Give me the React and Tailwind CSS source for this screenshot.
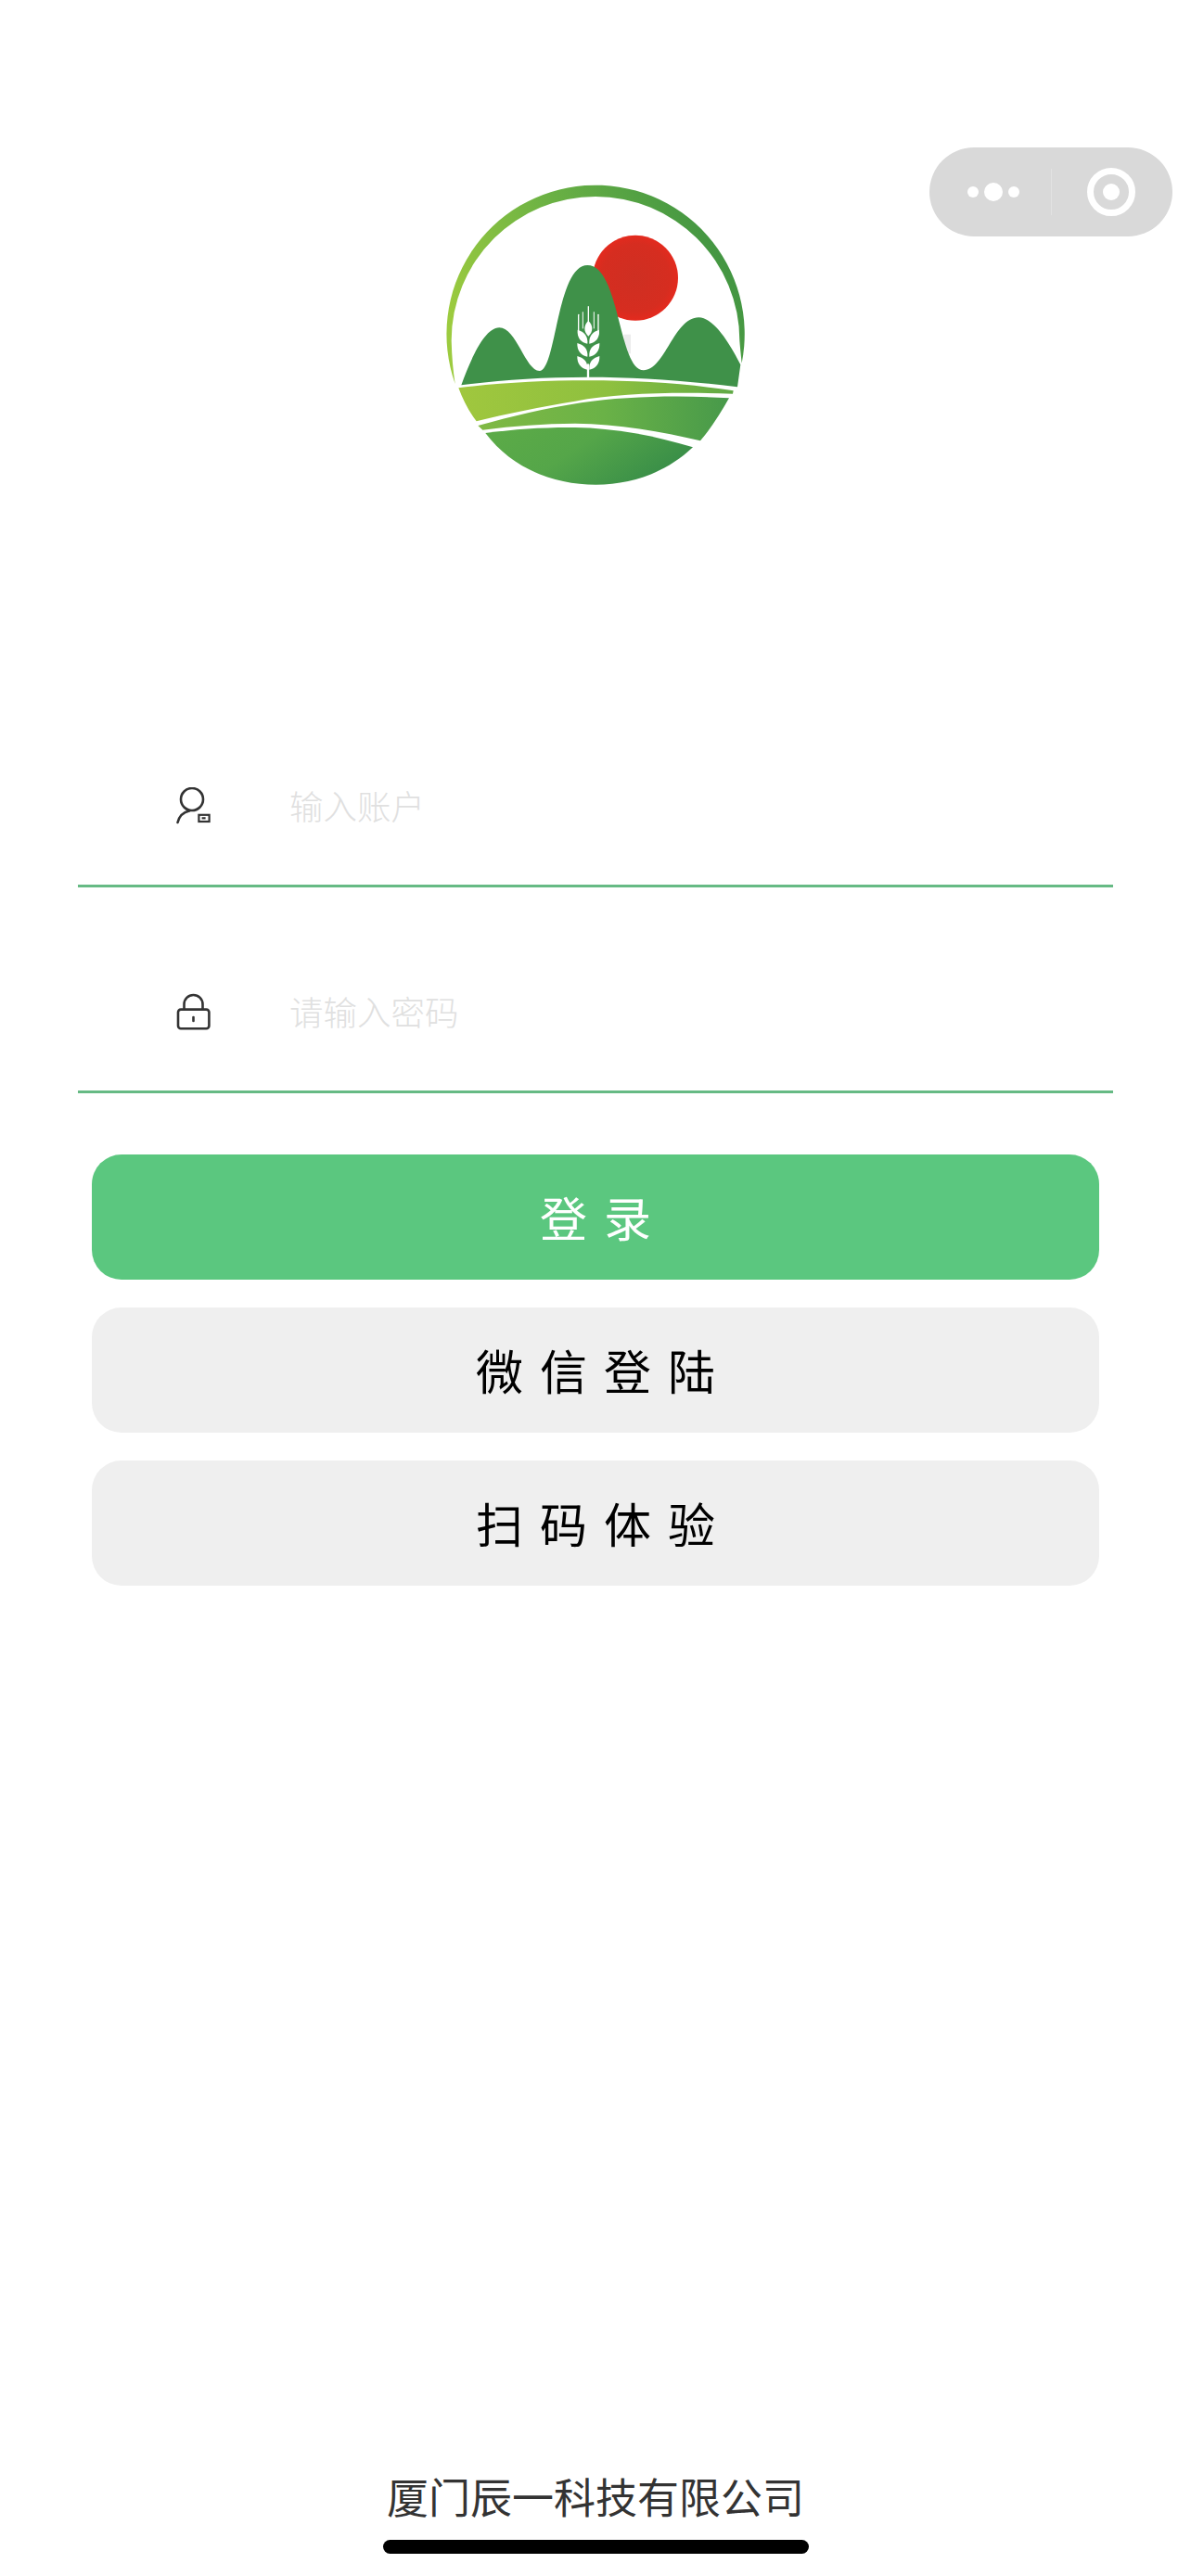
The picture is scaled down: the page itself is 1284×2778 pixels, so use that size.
const FONT = "font-['PingFang_SC','Noto_Sans_CJK_SC','Noto_Sans',sans-serif]";

function Logo() {
  return (
    <svg width="360" height="340" viewBox="0 0 1080 1020" className="block ml-[460px]">
      <defs>
        <linearGradient id="ring" x1="0" y1="0.6" x2="1" y2="0.3">
          <stop offset="0" stopColor="#9ccb3f" />
          <stop offset="0.45" stopColor="#6cb244" />
          <stop offset="1" stopColor="#3c9142" />
        </linearGradient>
        <linearGradient id="band1" x1="0" y1="0" x2="1" y2="0">
          <stop offset="0" stopColor="#a0c73e" />
          <stop offset="0.55" stopColor="#8ec03f" />
          <stop offset="1" stopColor="#5fa945" />
        </linearGradient>
        <linearGradient id="band2" x1="0" y1="0" x2="1" y2="0">
          <stop offset="0" stopColor="#80b944" />
          <stop offset="0.5" stopColor="#6ab247" />
          <stop offset="1" stopColor="#47994a" />
        </linearGradient>
        <linearGradient id="band3" x1="0" y1="0" x2="1" y2="0.4">
          <stop offset="0" stopColor="#5cab47" />
          <stop offset="0.5" stopColor="#55a649" />
          <stop offset="1" stopColor="#3a8f48" />
        </linearGradient>
        <radialGradient id="sun">
          <stop offset="0" stopColor="#cf2f22" />
          <stop offset="0.8" stopColor="#d62d20" />
          <stop offset="1" stopColor="#e42a1e" />
        </radialGradient>
      </defs>
      <path d="M92 672 A482 482 0 1 1 1019 605 Q1014 560 1012 532 A466 466 0 0 0 80 532 Q82 610 92 672 Z" fill="url(#ring)" />
      <circle cx="675" cy="329" r="138" fill="url(#sun)" />
      <rect x="638" y="512" width="22" height="62" fill="#ececec" />
      <path d="M112 676 C140 600 185 490 235 490 C290 490 320 630 365 630 C420 630 420 288 520 288 C625 288 620 628 702 628 C770 628 800 457 880 457 C930 457 985 550 1015 610 L1005 682 C830 660 680 650 520 650 C370 650 230 660 112 676 Z" fill="#3f9149" />
      <path d="M103 685 C240 668 380 661 520 661 C690 661 850 672 992 694 L990 704 C800 698 620 702 480 728 C370 746 260 768 161 793 C135 760 117 722 103 685 Z" fill="url(#band1)" />
      <path d="M166 807 C280 776 380 752 500 733 C640 712 820 708 978 718 C950 768 920 815 885 856 C760 825 620 802 480 800 C380 800 280 808 181 821 Z" fill="url(#band2)" />
      <path d="M190 831 C290 818 380 812 480 813 C610 815 740 840 861 877 C775 958 665 998 547 998 C410 998 275 945 190 831 Z" fill="url(#band3)" />
      <g fill="none" stroke="#ffffff" strokeLinecap="round">
        <path d="M522 650 V610" strokeWidth="7" />
        <path d="M523 422 V475" strokeWidth="4" />
        <path d="M491 448 V510" strokeWidth="4" />
        <path d="M555 448 V510" strokeWidth="4" />
        <path d="M505 440 V492" strokeWidth="3" />
        <path d="M541 440 V492" strokeWidth="3" />
      </g>
      <g fill="#ffffff">
        <path d="M523 468 C538 482 540 502 523 518 C506 502 508 482 523 468 Z" />
        <path d="M488 497 C510 503 522 518 520 542 C498 538 486 522 488 497 Z" />
        <path d="M558 497 C536 503 524 518 526 542 C548 538 560 522 558 497 Z" />
        <path d="M487 540 C510 546 522 560 520 584 C498 580 486 564 487 540 Z" />
        <path d="M559 540 C536 546 524 560 526 584 C548 580 560 564 559 540 Z" />
        <path d="M487 582 C510 588 522 602 520 626 C498 622 486 606 487 582 Z" />
        <path d="M559 582 C536 588 524 602 526 626 C548 622 560 606 559 582 Z" />
      </g>
    </svg>
  );
}

function UserIcon() {
  return (
    <svg width="40" height="40" viewBox="0 0 40 40" fill="none" stroke="#333333" strokeWidth="2.6" className="block">
      <circle cx="19" cy="13" r="12" />
      <path d="M16 25.5 C9 27 5 32 3.5 38" strokeLinecap="round" />
      <rect x="26.4" y="29.8" width="11.2" height="7.2" strokeWidth="2.2" />
      <rect x="29.6" y="32.2" width="4" height="2.2" fill="#333333" stroke="none" />
    </svg>
  );
}

function LockIcon() {
  return (
    <svg width="40" height="44" viewBox="0 0 40 44" fill="none" stroke="#333333" strokeWidth="2.6" className="block">
      <rect x="4" y="19.6" width="33.4" height="20.6" rx="3" />
      <path d="M10.5 19.6 V14 a10 10 0 0 1 20 0 V19.6" />
      <path d="M20.5 28 V32" strokeLinecap="round" />
    </svg>
  );
}

function Field({ icon, text, className }) {
  return (
    <div className={`mx-[84px] h-[170px] pb-[3px] border-b-[3px] border-[#66ba84] flex items-center pl-[104px] ${className}`}>
      <div className="w-[40px] flex justify-center">{icon}</div>
      <span className="ml-[84px] text-[36.5px] leading-[50px] font-light text-[#e0e0e0]">{text}</span>
    </div>
  );
}

function Btn({ text, className }) {
  return (
    <div className={`h-[135px] rounded-[32px] flex items-center justify-center pl-[18px] text-[51px] tracking-[18px] font-normal ${className}`}>
      {text}
    </div>
  );
}

export default function App() {
  return (
    <div className={`relative w-[1284px] h-[2778px] bg-white flex flex-col ${FONT}`}>
      <div className="absolute left-[1002px] top-[159px] w-[262px] h-[96px] rounded-[48px] bg-[#d9d9d9] flex items-center">
        <div className="w-[131px] flex items-center justify-center gap-[6px] pl-[7px]">
          <div className="w-[12px] h-[12px] rounded-full bg-white" />
          <div className="w-[20px] h-[20px] rounded-full bg-white" />
          <div className="w-[12px] h-[12px] rounded-full bg-white" />
        </div>
        <div className="w-px h-[50px] bg-[#e2e2e2]" />
        <div className="flex-1 flex items-center justify-center pr-[3px]">
          <div className="w-[52px] h-[52px] rounded-full border-[7px] border-white flex items-center justify-center">
            <div className="w-[18px] h-[18px] rounded-full bg-white" />
          </div>
        </div>
      </div>

      <div className="pt-[190px]">
        <Logo />
      </div>

      <Field icon={<UserIcon />} text="输入账户" className="mt-[257px]" />
      <Field icon={<LockIcon />} text="请输入密码" className="mt-[52px]" />

      <div className="mt-[66px] mx-[99px] flex flex-col gap-[30px]">
        <Btn text="登录" className="bg-[#5bc77f] text-white" />
        <Btn text="微信登陆" className="bg-[#efefef] text-black" />
        <Btn text="扫码体验" className="bg-[#efefef] text-black" />
      </div>

      <div className="mt-auto flex flex-col items-center pb-[24px]">
        <div className="text-[45px] leading-[60px] font-normal text-[#333333] mb-[17px]">厦门辰一科技有限公司</div>
        <div className="w-[459px] h-[15px] rounded-full bg-black" />
      </div>
    </div>
  );
}
